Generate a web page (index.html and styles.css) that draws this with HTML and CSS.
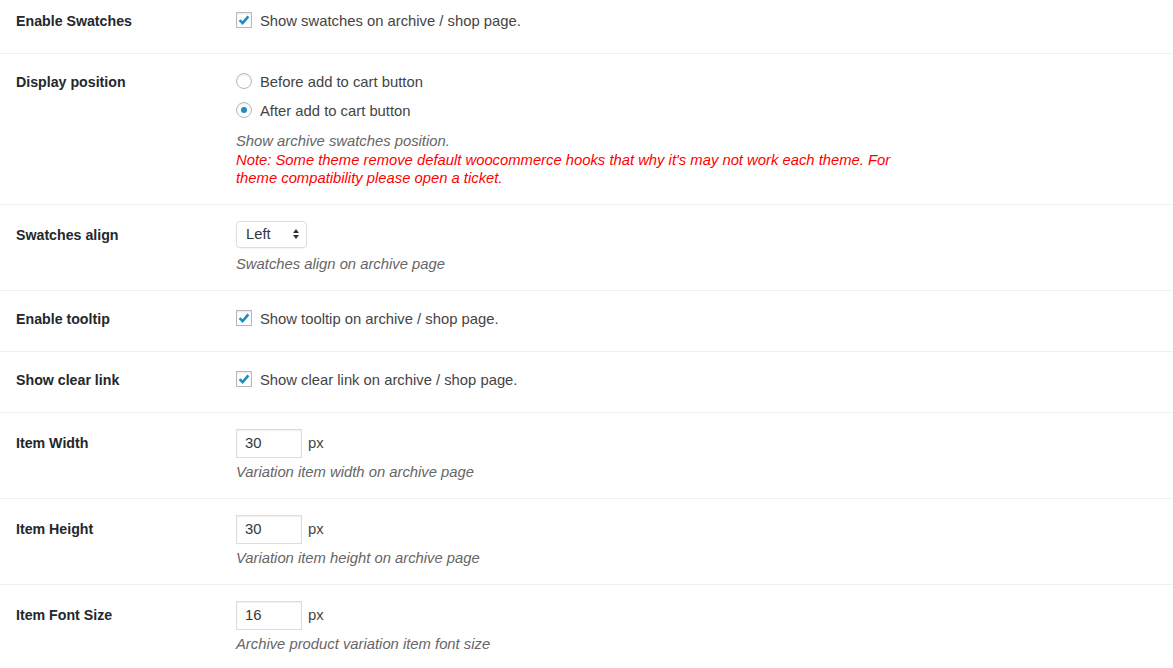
FILE: index.html
```html
<!DOCTYPE html>
<html lang="en">
<head>
<meta charset="utf-8">
<title>Archive Swatches Settings</title>
<link rel="stylesheet" href="styles.css">
</head>
<body>
<div class="form-table">

  <div class="row row--first">
    <div class="th">Enable Swatches</div>
    <div class="td">
      <label class="opt">
        <span class="checkbox"><svg viewBox="0 0 16 16" width="16" height="16"><path d="M3.6 8.2 L6.6 11.2 L12.4 4.4" fill="none" stroke="#1e8cbe" stroke-width="2.6"/></svg></span>
        <span class="opt-text">Show swatches on archive / shop page.</span>
      </label>
    </div>
  </div>

  <div class="row">
    <div class="th">Display position</div>
    <div class="td">
      <label class="opt"><span class="radio"></span><span class="opt-text">Before add to cart button</span></label>
      <label class="opt"><span class="radio radio--on"></span><span class="opt-text">After add to cart button</span></label>
      <p class="desc desc--note">Show archive swatches position.<br><span class="note">Note: Some theme remove default woocommerce hooks that why it's may not work each theme. For theme compatibility please open a ticket.</span></p>
    </div>
  </div>

  <div class="row">
    <div class="th th--field">Swatches align</div>
    <div class="td">
      <div class="field">
        <span class="select">Left<svg class="select-arrows" viewBox="0 0 8 12" width="8" height="12"><path d="M4 1 L7 5 L1 5 Z M4 11 L7 7 L1 7 Z" fill="#333"/></svg></span>
      </div>
      <p class="desc">Swatches align on archive page</p>
    </div>
  </div>

  <div class="row">
    <div class="th">Enable tooltip</div>
    <div class="td">
      <label class="opt">
        <span class="checkbox"><svg viewBox="0 0 16 16" width="16" height="16"><path d="M3.6 8.2 L6.6 11.2 L12.4 4.4" fill="none" stroke="#1e8cbe" stroke-width="2.6"/></svg></span>
        <span class="opt-text">Show tooltip on archive / shop page.</span>
      </label>
    </div>
  </div>

  <div class="row">
    <div class="th">Show clear link</div>
    <div class="td">
      <label class="opt">
        <span class="checkbox"><svg viewBox="0 0 16 16" width="16" height="16"><path d="M3.6 8.2 L6.6 11.2 L12.4 4.4" fill="none" stroke="#1e8cbe" stroke-width="2.6"/></svg></span>
        <span class="opt-text">Show clear link on archive / shop page.</span>
      </label>
    </div>
  </div>

  <div class="row">
    <div class="th th--field">Item Width</div>
    <div class="td">
      <div class="field"><span class="input">30</span><span class="unit">px</span></div>
      <p class="desc">Variation item width on archive page</p>
    </div>
  </div>

  <div class="row">
    <div class="th th--field">Item Height</div>
    <div class="td">
      <div class="field"><span class="input">30</span><span class="unit">px</span></div>
      <p class="desc">Variation item height on archive page</p>
    </div>
  </div>

  <div class="row">
    <div class="th th--field">Item Font Size</div>
    <div class="td">
      <div class="field"><span class="input">16</span><span class="unit">px</span></div>
      <p class="desc">Archive product variation item font size</p>
    </div>
  </div>

</div>
</body>
</html>
```

FILE: styles.css
```css
* { box-sizing: border-box; }

html, body {
  margin: 0;
  padding: 0;
  background: #fff;
}

body {
  font-family: "Liberation Sans", Arial, sans-serif;
  font-size: 14px;
  color: #444;
  overflow: hidden;
}

.form-table {
  display: flex;
  flex-direction: column;
}

.row {
  display: flex;
  border-bottom: 1px solid #eee;
  padding: 15px 0 16px;
}

.row--first {
  padding-top: 8px;
}

.th {
  width: 236px;
  flex: none;
  padding-left: 16px;
  padding-top: 1px;
  font-size: 14.2px;
  font-weight: bold;
  color: #23282d;
  line-height: 24px;
}

.th--field {
  line-height: 28px;
}

.td {
  flex: 1;
  min-width: 0;
  font-size: 14.8px;
}

.opt {
  display: flex;
  align-items: center;
  height: 24px;
  margin-bottom: 5px;
  color: #444;
  white-space: nowrap;
}

.opt-text {
  padding-top: 2px;
}

.checkbox,
.radio {
  flex: none;
  width: 16px;
  height: 16px;
  margin-right: 8px;
  border: 1px solid #b4b9be;
  background: #fff;
  box-shadow: inset 0 1px 2px rgba(0, 0, 0, 0.1);
  display: flex;
  align-items: center;
  justify-content: center;
}

.checkbox svg {
  display: block;
  margin: -1px;
}

.radio {
  border-radius: 50%;
}

.radio--on::before {
  content: "";
  width: 6px;
  height: 6px;
  border-radius: 50%;
  background: #1e8cbe;
}

.desc {
  margin: 6px 0 0;
  font-style: italic;
  color: #666;
  line-height: 19px;
  max-width: 670px;
}

.desc--note {
  margin-top: 10px;
  line-height: 18.5px;
}

.note {
  color: #ff0000;
}

.field {
  display: flex;
  align-items: flex-start;
  height: 29px;
  padding-top: 1px;
  margin-bottom: 2px;
}

.select {
  display: flex;
  align-items: center;
  justify-content: space-between;
  width: 71px;
  height: 27px;
  padding: 0 6px 0 9px;
  border: 1px solid #ddd;
  border-radius: 4px;
  background: #fff;
  color: #32373c;
  box-shadow: 0 1px 1px rgba(0, 0, 0, 0.04);
}

.select-arrows {
  display: block;
}

.input {
  display: flex;
  align-items: center;
  width: 66px;
  height: 29px;
  padding: 0 8px;
  border: 1px solid #ddd;
  background: #fff;
  color: #32373c;
  box-shadow: inset 0 1px 2px rgba(0, 0, 0, 0.07);
}

.unit {
  align-self: center;
  margin-left: 6px;
  color: #444;
}
```
